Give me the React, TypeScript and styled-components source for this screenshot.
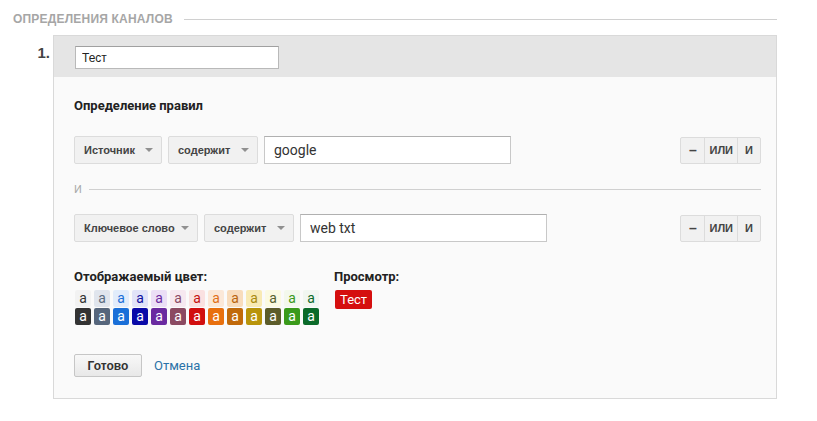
import React from 'react';
import styled, { createGlobalStyle } from 'styled-components';

const GlobalStyle = createGlobalStyle`
  body {
    margin: 0;
    background: #ffffff;
    font-family: Roboto, "Liberation Sans", Arial, sans-serif;
    color: #333;
  }
`;

const Page = styled.div`
  padding: 11px 40px 0 13px;
`;

const SectionHeader = styled.div`
  display: flex;
  align-items: center;
  gap: 11px;
  height: 16px;
`;

const SectionTitle = styled.span`
  font-family: "Liberation Sans", Arial, sans-serif;
  font-size: 12px;
  font-weight: bold;
  color: #a6a6a6;
  letter-spacing: 0.2px;
`;

const Rule = styled.div`
  flex: 1;
  height: 1px;
  background: #d0d0d0;
`;

const Entry = styled.div`
  display: flex;
  margin-top: 8px;
`;

const Number = styled.div`
  width: 40px;
  box-sizing: border-box;
  padding: 9px 3px 0 0;
  text-align: right;
  font-family: "Liberation Sans", Arial, sans-serif;
  font-size: 15px;
  font-weight: bold;
  color: #444;
`;

const Panel = styled.div`
  flex: 1;
  border: 1px solid #d9d9d9;
`;

const PanelHead = styled.div`
  background: #e5e5e5;
  padding: 10px 21px 8px;
`;

const NameInput = styled.input`
  width: 204px;
  height: 23px;
  box-sizing: border-box;
  border: 1px solid #b9b9b9;
  border-top-color: #a0a0a0;
  padding: 0 6px;
  font-family: "Liberation Sans", Arial, sans-serif;
  font-size: 12px;
  color: #222;
  background: #fff;
  outline: none;
`;

const PanelBody = styled.div`
  background: #fafafa;
  padding: 21px 15px 21px 20px;
`;

const Heading = styled.div`
  font-size: 13px;
  font-weight: bold;
  color: #222;
  line-height: 16px;
`;

const RuleRow = styled.div<{ $top: number }>`
  display: flex;
  align-items: center;
  gap: 6px;
  margin-top: ${(p) => p.$top}px;
`;

const Select = styled.button<{ $w: number }>`
  display: flex;
  align-items: center;
  justify-content: space-between;
  height: 28px;
  width: ${(p) => p.$w}px;
  box-sizing: border-box;
  padding: 0 8px 0 9px;
  border: 1px solid #dcdcdc;
  border-radius: 2px;
  background: #f1f1f1;
  font-family: "Liberation Sans", Arial, sans-serif;
  font-size: 11px;
  font-weight: bold;
  color: #444;
`;

const Caret = styled.span`
  width: 0;
  height: 0;
  border-left: 4px solid transparent;
  border-right: 4px solid transparent;
  border-top: 4px solid #909090;
`;

const ValueInput = styled.input`
  width: 247px;
  height: 28px;
  box-sizing: border-box;
  border: 1px solid #c8c8c8;
  border-top-color: #b0b0b0;
  padding: 0 9px;
  font-family: Roboto, Arial, sans-serif;
  font-size: 14px;
  color: #333;
  background: #fff;
  outline: none;
`;

const Spacer = styled.div`
  flex: 1;
`;

const BtnGroup = styled.div`
  display: flex;
  height: 25px;
  border: 1px solid #dcdcdc;
  border-radius: 2px;
  background: #f1f1f1;
`;

const GroupBtn = styled.button<{ $first?: boolean }>`
  height: 100%;
  min-width: 23px;
  padding: 0 4px;
  border: none;
  border-left: ${(p) => (p.$first ? 'none' : '1px solid #dcdcdc')};
  background: transparent;
  font-family: "Liberation Sans", Arial, sans-serif;
  font-size: ${(p) => (p.$first ? 14 : 11)}px;
  font-weight: bold;
  color: #444;
`;

const AndDivider = styled.div`
  display: flex;
  align-items: center;
  gap: 7px;
  margin-top: 19px;
  font-size: 11px;
  color: #aaa;
`;

const ColorSection = styled.div`
  display: flex;
  gap: 15px;
  margin-top: 27px;
`;

const ColorBlock = styled.div`
  display: flex;
  flex-direction: column;
  gap: 5px;
`;

const Swatches = styled.div`
  display: grid;
  grid-template-columns: repeat(13, 16px);
  column-gap: 3px;
  row-gap: 1px;
  padding-left: 1px;
`;

const Swatch = styled.div<{ $bg: string; $fg: string }>`
  height: 17px;
  border-radius: 2px;
  background: ${(p) => p.$bg};
  color: ${(p) => p.$fg};
  font-size: 14px;
  line-height: 16px;
  text-align: center;
`;

const Preview = styled.span`
  align-self: flex-start;
  margin-left: 1px;
  padding: 0 5px;
  height: 19px;
  line-height: 19px;
  border-radius: 2px;
  background: #d50f0f;
  color: #fff;
  font-size: 13px;
`;

const Actions = styled.div`
  display: flex;
  align-items: center;
  gap: 12px;
  margin-top: 29px;
`;

const DoneButton = styled.button`
  height: 23px;
  width: 68px;
  border: 1px solid #c6c6c6;
  border-radius: 2px;
  background: linear-gradient(#f8f8f8, #e8e8e8);
  font-family: "Liberation Sans", Arial, sans-serif;
  font-size: 12px;
  font-weight: bold;
  color: #333;
`;

const CancelLink = styled.a`
  font-size: 13px;
  color: #2a72a8;
  text-decoration: none;
`;

const light = [
  ['#f2f2f2', '#333'],
  ['#e0e5ed', '#5a6b80'],
  ['#e1ecfb', '#1a6fd8'],
  ['#e1e3f8', '#1010a0'],
  ['#ebdff6', '#6a2aa0'],
  ['#f6e8f0', '#8b4a66'],
  ['#fae1e1', '#c41010'],
  ['#fbe8d8', '#e07018'],
  ['#f8dcbc', '#b8650f'],
  ['#f8eab4', '#a88a10'],
  ['#fbfae2', '#566030'],
  ['#f3f8ec', '#3a9a1a'],
  ['#f1f6f1', '#0b6a2a'],
];

const dark = [
  '#333333', '#56667c', '#1a6fd8', '#0a0aa8', '#6a2aa0', '#8b4a62', '#d10f0f',
  '#e8700e', '#c16a0a', '#b8940a', '#5c5c2a', '#3a9a1a', '#0b6a2a',
];

const Row: React.FC<{ field: string; fw: number; value: string; top: number }> = ({ field, fw, value, top }) => (
  <RuleRow $top={top}>
    <Select $w={fw}>
      {field}
      <Caret />
    </Select>
    <Select $w={90}>
      содержит
      <Caret />
    </Select>
    <ValueInput defaultValue={value} />
    <Spacer />
    <BtnGroup>
      <GroupBtn $first>–</GroupBtn>
      <GroupBtn>ИЛИ</GroupBtn>
      <GroupBtn>И</GroupBtn>
    </BtnGroup>
  </RuleRow>
);

export default function App() {
  return (
    <Page>
      <GlobalStyle />
      <SectionHeader>
        <SectionTitle>ОПРЕДЕЛЕНИЯ КАНАЛОВ</SectionTitle>
        <Rule />
      </SectionHeader>
      <Entry>
        <Number>1.</Number>
        <Panel>
          <PanelHead>
            <NameInput defaultValue="Тест" />
          </PanelHead>
          <PanelBody>
            <Heading>Определение правил</Heading>
            <Row field="Источник" fw={88} value="google" top={22} />
            <AndDivider>
              И
              <Rule />
            </AndDivider>
            <Row field="Ключевое слово" fw={124} value="web txt" top={18} />
            <ColorSection>
              <ColorBlock>
                <Heading>Отображаемый цвет:</Heading>
                <Swatches>
                  {light.map(([bg, fg], i) => (
                    <Swatch key={'l' + i} $bg={bg} $fg={fg}>a</Swatch>
                  ))}
                  {dark.map((bg, i) => (
                    <Swatch key={'d' + i} $bg={bg} $fg="#fff">a</Swatch>
                  ))}
                </Swatches>
              </ColorBlock>
              <ColorBlock>
                <Heading>Просмотр:</Heading>
                <Preview>Тест</Preview>
              </ColorBlock>
            </ColorSection>
            <Actions>
              <DoneButton>Готово</DoneButton>
              <CancelLink href="#">Отмена</CancelLink>
            </Actions>
          </PanelBody>
        </Panel>
      </Entry>
    </Page>
  );
}
